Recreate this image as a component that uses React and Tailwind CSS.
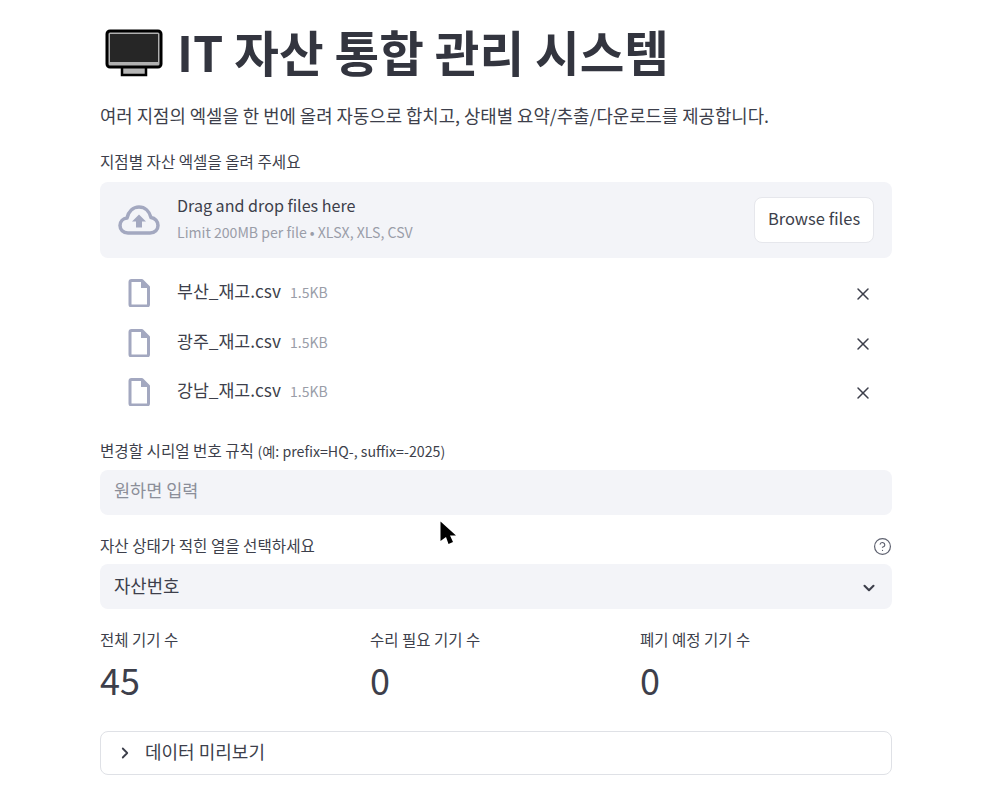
import { ChevronDown, ChevronRight, X, CircleHelp } from 'lucide-react';

const files = ['부산_재고.csv', '광주_재고.csv', '강남_재고.csv'];

const metrics = [
  { label: '전체 기기 수', value: '45' },
  { label: '수리 필요 기기 수', value: '0' },
  { label: '폐기 예정 기기 수', value: '0' },
];

function MonitorEmoji() {
  return (
    <svg width="58" height="48" viewBox="0 0 58 48" className="shrink-0">
      <path d="M17 37h24v9H17z" fill="#b5b5b5" stroke="#000" strokeWidth="2.5" />
      <rect x="2" y="2" width="54" height="36" rx="3" fill="#b0b0b0" stroke="#000" strokeWidth="3" />
      <rect x="5" y="5" width="48" height="28" fill="#262626" />
    </svg>
  );
}

function CloudUpload() {
  return (
    <svg width="42" height="30" viewBox="0 0 42 30" className="shrink-0">
      <path d="M10 28C5 28 2 24.500 2 20.500C2 16.500 5 13.500 9 13C10.500 6.500 15 2 21 2C27 2 31.500 6.500 33 12.500C37 13 40 16.500 40 20.500C40 24.500 37 28 32 28Z" fill="none" stroke="#a3a8c0" strokeWidth="3.500" strokeLinejoin="round" />
      <path d="M21 9.500L28 16.500H24V22.500H18V16.500H14Z" fill="#a3a8c0" />
    </svg>
  );
}

function FileIcon() {
  return (
    <svg width="22" height="28" viewBox="0 0 22 28" className="mt-[1px] shrink-0">
      <path d="M2 3a1.500 1.500 0 0 1 1.500-1.500H14L20.500 8v17.500A1.500 1.500 0 0 1 19 27H3.500A1.500 1.500 0 0 1 2 25.500Z" fill="none" stroke="#a3a8c0" strokeWidth="3" strokeLinejoin="round" />
      <path d="M13 1.500L20.500 9H13Z" fill="#a3a8c0" />
    </svg>
  );
}

export default function App() {
  return (
    <div className="relative h-[791px] overflow-hidden bg-white text-[#3d3f4b] font-['Noto_Sans_CJK_KR','Noto_Sans',sans-serif]">
      <div className="ml-[100px] w-[792px] pt-[20px]">
        <div className="flex h-[66px] items-center gap-[14px] pl-[5px]">
          <MonitorEmoji />
          <h1 className="pb-[4px] text-[48.500px] font-bold leading-none text-[#33353f]">IT 자산 통합 관리 시스템</h1>
        </div>
        <p className="mt-[15px] text-[17.800px] leading-[28px]">
          여러 지점의 엑셀을 한 번에 올려 자동으로 합치고, 상태별 요약/추출/다운로드를 제공합니다.
        </p>

        <label className="mt-[22px] block text-[15.600px] leading-[20px]">지점별 자산 엑셀을 올려 주세요</label>
        <div className="mt-[11px] flex h-[76px] items-center justify-between rounded-lg bg-[#f3f4f8] pl-[18px] pr-[18px]">
          <div className="flex items-center gap-[17px]">
            <CloudUpload />
            <div className="pb-[6px]">
              <div className="text-[16.100px] leading-[24px]">Drag and drop files here</div>
              <div className="mt-[5px] text-[14.100px] leading-[20px] text-[#9a9da8]">Limit 200MB per file • XLSX, XLS, CSV</div>
            </div>
          </div>
          <button className="h-[46px] w-[120px] rounded-lg border border-[#e6e7ec] bg-white pb-[3px] text-[16.500px]">Browse files</button>
        </div>

        <ul className="mt-[10px]">
          {files.map(name => (
            <li key={name} className="flex h-[49.500px] items-center justify-between pl-[28px] pr-[19px]">
              <div className="flex items-center gap-[27px]">
                <FileIcon />
                <div className="mb-[3px] flex items-baseline gap-[9px]">
                  <span className="text-[17.300px] leading-[24px]">{name}</span>
                  <span className="text-[14px] text-[#9a9da8]">1.5KB</span>
                </div>
              </div>
              <X size={20} strokeWidth={1.800} className="mt-[3px]" />
            </li>
          ))}
        </ul>

        <label className="mt-[23px] block text-[15.600px] leading-[20px]">
          변경할 시리얼 번호 규칙 <span className="text-[14.200px]">(예: prefix=HQ-, suffix=-2025)</span>
        </label>
        <div className="mt-[9px] flex h-[45px] items-center rounded-lg bg-[#f3f4f8] px-[14px] pb-[3px] text-[17.500px] text-[#8b8e99]">원하면 입력</div>

        <div className="mt-[20px] flex h-[20px] items-center justify-between">
          <label className="text-[15.600px] leading-[20px]">자산 상태가 적힌 열을 선택하세요</label>
          <CircleHelp size={19} strokeWidth={1.500} className="mt-[3px] text-[#5f6270]" />
        </div>
        <div className="mt-[9px] flex h-[45px] items-center justify-between rounded-lg bg-[#f3f4f8] pl-[14px] pr-[14px] text-[17.800px]">
          <span className="pb-[2px]">자산번호</span>
          <ChevronDown size={18} strokeWidth={2.800} className="mt-[3px]" />
        </div>

        <div className="mt-[20px] grid grid-cols-3 gap-[18px]">
          {metrics.map(m => (
            <div key={m.label}>
              <div className="text-[15.500px] leading-[20px]">{m.label}</div>
              <div className="mt-[6px] text-[36px] leading-[48px]">{m.value}</div>
            </div>
          ))}
        </div>

        <div className="mt-[28px] flex h-[44px] items-center gap-[11px] rounded-lg border border-[#dfe1e6] pb-[3px] pl-[15px] text-[18px]">
          <ChevronRight size={18} strokeWidth={2.400} className="mt-[3px]" />
          <span>데이터 미리보기</span>
        </div>
      </div>

      {/* mouse pointer caught in the capture */}
      <svg width="17" height="24" viewBox="0 0 17 24" className="absolute left-[440px] top-[521px]">
        <path d="M0.500 0.500L16 14.500H10L13 21L8.500 23L6 16L0.500 20Z" fill="#000" />
      </svg>
    </div>
  );
}
